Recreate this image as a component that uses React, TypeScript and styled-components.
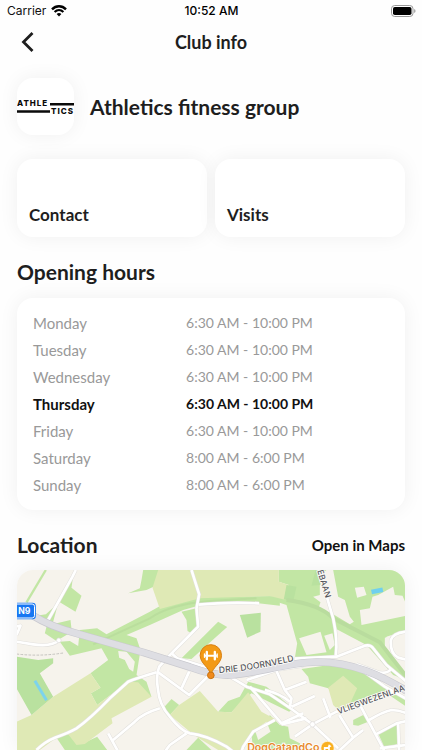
import React from "react";
import styled, { createGlobalStyle } from "styled-components";

const GlobalStyle = createGlobalStyle`
  *, *::before, *::after { box-sizing: border-box; }
  body {
    margin: 0;
    background: #fefefe;
    color: #1e1e1e;
    font-family: Lato, "Open Sans", sans-serif;
  }
  h1, h2, p { margin: 0; }
`;

const cardShadow = "0 0 20px rgba(0, 0, 0, 0.06)";

const Screen = styled.div`
  display: flex;
  flex-direction: column;
  overflow: hidden;
`;

const StatusBar = styled.div`
  display: grid;
  grid-template-columns: 1fr auto 1fr;
  align-items: center;
  height: 22px;
  padding: 0 6px 0 7px;
  font: 400 12px/22px Inter, sans-serif;
  color: #111;
`;

const Carrier = styled.div`
  display: flex;
  align-items: center;
  gap: 5px;
`;

const Clock = styled.time`
  font-weight: 500;
  color: #000;
`;

const BatterySlot = styled.div`
  display: flex;
  justify-content: flex-end;
`;

const NavBar = styled.header`
  display: grid;
  grid-template-columns: 48px 1fr 48px;
  align-items: center;
  height: 40px;
`;

const BackButton = styled.button`
  display: flex;
  align-items: center;
  justify-content: center;
  height: 40px;
  padding: 0 0 0 8px;
  border: 0;
  background: none;
  color: #1e1e1e;
`;

const NavTitle = styled.h1`
  font-size: 18px;
  line-height: 24px;
  font-weight: 700;
  text-align: center;
`;

const Content = styled.main`
  display: flex;
  flex-direction: column;
  padding: 16px 17px 0;
`;

const ClubRow = styled.div`
  display: flex;
  align-items: center;
  gap: 16px;
  margin-bottom: 24px;
`;

const LogoTile = styled.div`
  display: flex;
  align-items: center;
  justify-content: center;
  width: 57px;
  height: 57px;
  border-radius: 16px;
  background: #fff;
  box-shadow: ${cardShadow};
`;

const Heading = styled.h2`
  font-size: 21px;
  line-height: 28px;
  font-weight: 700;
`;

const TileRow = styled.div`
  display: grid;
  grid-template-columns: 1fr 1fr;
  gap: 8px;
  margin-bottom: 21px;
`;

const Tile = styled.button`
  display: flex;
  align-items: flex-end;
  height: 78px;
  padding: 12px;
  border: 0;
  border-radius: 16px;
  background: #fff;
  box-shadow: ${cardShadow};
  color: #1e1e1e;
  font: 700 17px/20px Lato, sans-serif;
`;

const HoursCard = styled.section`
  margin: 12px 0 21px;
  padding: 11px 16px 12px;
  border-radius: 16px;
  background: #fff;
  box-shadow: ${cardShadow};
`;

const HoursTable = styled.table`
  width: 100%;
  border-collapse: collapse;
  table-layout: fixed;
`;

const HoursRow = styled.tr<{ $today: boolean }>`
  height: 27px;
  line-height: 20px;
  color: ${(p) => (p.$today ? "#111" : "#999")};

  th, td {
    padding: 0;
    text-align: left;
    font-weight: ${(p) => (p.$today ? 700 : 400)};
  }
  th {
    width: 43%;
    font-size: 15px;
  }
  td { font-size: 14px; }
`;

const LocationHead = styled.div`
  display: flex;
  align-items: center;
  justify-content: space-between;
  margin-bottom: 11px;
`;

const MapsLink = styled.a`
  color: #111;
  font-size: 15px;
  line-height: 20px;
  font-weight: 700;
  text-decoration: none;
`;

const MapFrame = styled.div`
  overflow: hidden;
  border-radius: 16px 16px 0 0;
  box-shadow: ${cardShadow};
`;

const MapSvg = styled.svg`
  display: block;
  width: 100%;
  height: 180px;
  font-family: Inter, sans-serif;
`;

const WifiIcon = () => (
  <svg width="16" height="12" viewBox="0 0 16 12" fill="none" aria-hidden="true">
    <path d="M1 4.3C5 .2 11 .2 15 4.3" stroke="#000" strokeWidth="2.4" />
    <path d="M3.6 7C6.2 4.5 9.8 4.5 12.4 7" stroke="#000" strokeWidth="2.2" />
    <path d="M8 11.5L5.6 8.9Q8 7 10.4 8.9Z" fill="#000" />
  </svg>
);

const BatteryIcon = () => (
  <svg width="25" height="12" viewBox="0 0 25 12" aria-hidden="true">
    <rect x=".5" y=".5" width="21.5" height="11" rx="3.2" fill="#fff" stroke="#999" />
    <rect x="2" y="2" width="18.5" height="8" rx="1.8" fill="#000" />
    <path d="M23.2 4v4q1.3-.6 1.3-2t-1.3-2Z" fill="#999" />
  </svg>
);

const ClubLogo = () => (
  <svg width="57" height="18" viewBox="0 0 57 18" role="img" aria-label="Athletics logo">
    <g fill="#0a0a0a" fontFamily="Inter, sans-serif" fontWeight="800" fontSize="8" letterSpacing="1">
      <text x="0" y="8">ATHLE</text>
      <text x="34" y="16">TICS</text>
    </g>
    <path d="M33 6.2h24M0 13.5h33" stroke="#0a0a0a" strokeWidth="2.4" />
  </svg>
);

const mainRoad =
  "M70 152Q120 184 200 205L400 262L540 306Q610 332 660 330C740 326 830 292 920 291C1030 290 1120 335 1190 378";

const minorRoads = [
  "M198 15L188 35L115 165",
  "M20 230L70 238Q125 246 148 226",
  "M20 184L32 182L20 210",
  "M80 555Q105 530 135 518Q180 502 200 490Q240 462 300 400L355 350Q380 340 440 322",
  "M545 15L568 88L560 130L565 185L540 210L485 265L448 305Q438 330 444 370Q448 420 480 455Q515 500 540 505Q590 510 650 545L670 560",
  "M566 119Q650 111 748 115",
  "M485 265L502 280L600 310",
  "M442 320L538 390L598 330",
  "M538 320L515 370",
  "M450 430Q400 445 375 470L310 525M295 505L325 560",
  "M530 505L480 540L465 560",
  "M660 335L710 365L780 388L845 432L908 478L985 550",
  "M720 365L815 475L880 445",
  "M795 465L730 500L700 545L695 560",
  "M710 345L800 315L880 302",
  "M800 318L825 375L890 350",
  "M825 375L845 400L840 425M845 425L915 393",
  "M765 375Q810 385 840 410",
  "M855 281L980 275L1065 242Q1082 238 1090 250L1130 300L1190 350",
  "M950 92L970 160Q984 225 978 272",
  "M1040 298L1110 323Q1135 326 1145 310",
  "M1060 318L1125 365L1190 402",
  "M1190 200Q1150 203 1143 225Q1140 265 1165 278L1190 284",
  "M940 400L962 458M908 478L980 440L1040 425L1190 365",
  "M988 450L1030 518L985 560M1030 518L1060 495",
  "M1053 425L1125 560",
  "M1078 465Q1120 440 1145 435Q1170 435 1190 445",
  "M1098 508L1160 475L1190 468M1165 475L1168 560M1110 550L1190 540",
  "M908 478L855 515M815 478L890 460",
];

const greens = [
  "190,32 185,68 215,92 197,140 150,112",
  "80,152 108,148 145,115 128,178 182,165 186,200 140,228 105,205 112,178",
  "150,230 180,228 205,243 210,195 262,190 290,208 420,140 460,118 570,95 810,93 810,122 720,112 565,122 520,135 420,180 350,210 380,220 392,255 380,330 410,350 425,395 355,350 262,420 243,385 272,368 242,325 295,285 275,250 180,272",
  "140,518 175,508 220,535 262,515 292,555 165,555",
  "395,45 400,15 452,15 460,52 410,75 355,85 390,70",
  "515,140 560,130 566,185 545,205 533,198 530,165",
  "515,280 625,170 652,186 545,282",
  "460,430 485,402 508,420 480,450",
  "625,440 655,408 690,395 715,350 770,365 850,430 838,440 725,385 695,410 665,442",
  "530,555 565,518 605,555",
  "807,15 1190,15 1190,195 1130,215 1125,245 1190,345 1150,330 1070,240 975,190 980,272 855,280 862,235 830,120 800,110 837,60 807,50",
  "875,312 975,298 1050,315 1190,400 1190,425 1130,385 1080,405 1015,435 955,370 900,355 895,335",
  "1030,465 1060,450 1075,470 1045,482 1030,480",
  "1105,505 1160,478 1168,535 1125,550",
  "780,450 810,480 835,485 840,520 870,535 875,555 780,555 730,555 725,510 765,480",
];

const farmland = [
  "445,15 807,15 807,50 837,60 828,105 780,93 570,100 450,132 428,68",
  "20,555 20,470 65,450 130,395 242,325 272,368 243,385 262,420 355,350 385,352 425,395 305,460 308,475 225,537 200,540 175,508 140,518 90,555",
  "480,450 508,420 570,378 625,440 665,442 715,382 755,440 795,462 725,500 700,555 625,555 565,518 540,500",
  "955,368 1000,332 1042,370 1028,400 1015,432 988,438 970,420",
];

const openLand = [
  "930,30 950,15 970,15 985,95 1005,105 1020,155 1032,170 1020,178 965,145 925,132 932,112 910,95 930,90",
  "1035,68 1062,65 1070,90 1042,98",
  "1050,135 1080,130 1088,95 1105,90 1150,65 1155,90 1178,92 1190,120 1190,152 1055,180",
  "868,220 932,200 950,262 890,270",
  "943,212 968,205 975,240 960,255",
  "1050,262 1080,265 1115,300 1070,290",
  "1125,218 1190,200 1190,290 1165,282 1125,250",
  "325,258 350,260 375,290 370,320 358,312 345,285 328,278",
  "735,495 770,470 782,500 745,525",
];

const AreaMap = () => (
  <MapSvg viewBox="20 15 1167 540" preserveAspectRatio="xMidYMin slice" role="img" aria-label="Map of the club location">
    <rect x="20" y="15" width="1170" height="545" fill="#f6f3ec" />
    <g fill="#c2e6a4">{greens.map((p) => <polygon key={p} points={p} />)}</g>
    <g fill="#dfe9b5">{farmland.map((p) => <polygon key={p} points={p} />)}</g>
    <g fill="#f6f3ec">{openLand.map((p) => <polygon key={p} points={p} />)}</g>
    <g fill="#b9e19f">
      <polygon points="20,275 85,285 130,280 130,295 90,325 130,395 65,450 20,370" />
      <polygon points="690,150 753,143 752,200 712,218" />
      <polygon points="830,60 860,65 850,110 822,103" />
      <polygon points="917,15 930,15 932,60 905,62" />
    </g>
    <path d="M108 15L50 112" stroke="#c2e6a4" strokeWidth="7" />
    <path d="M830 105Q930 118 970 160L1110 232L1190 335" fill="none" stroke="#b9dc9e" strokeWidth="12" />
    <path d="M250 238L420 160Q480 118 600 108L740 100" fill="none" stroke="#b4d99a" strokeWidth="6" opacity=".6" />
    <path d="M75 347L110 406" stroke="#7cd3ec" strokeWidth="9" />
    <path d="M1085 81L1119 74" stroke="#6fd0ee" strokeWidth="14" />
    <path d="M20 267Q90 275 160 264" fill="none" stroke="#c4c2be" strokeWidth="3" strokeDasharray="8 4" />
    <g fill="none" strokeLinejoin="round">
      <g stroke="#e2e0dd" strokeWidth="11">{minorRoads.map((d) => <path key={d} d={d} />)}</g>
      <g stroke="#fff" strokeWidth="8">{minorRoads.map((d) => <path key={d} d={d} />)}</g>
      <path d={mainRoad} stroke="#c9c9cf" strokeWidth="23" />
      <path d={mainRoad} stroke="#dedee3" strokeWidth="19" />
    </g>
    <circle cx="147" cy="226" r="7" fill="#fff" stroke="#dcdad8" strokeWidth="2" />
    <circle cx="908" cy="478" r="8" fill="#fff" stroke="#dcdad8" strokeWidth="2" />
    <path id="drie-path" d="M628 324Q730 318 880 281" fill="none" />
    <path id="vlieg-path" d="M986 448L1230 360" fill="none" />
    <path id="baan-path" d="M922 17L950 110" fill="none" />
    <g fill="#55555b" stroke="#fbfaf6" strokeWidth="5" paintOrder="stroke" fontWeight="500">
      <text fontSize="26"><textPath href="#drie-path">DRIE DOORNVELD</textPath></text>
      <text fontSize="25"><textPath href="#vlieg-path">VLIEGWEZENLAA</textPath></text>
      <text fontSize="25"><textPath href="#baan-path">EBAAN</textPath></text>
    </g>
    <rect x="2" y="113" width="76" height="50" rx="10" fill="#1877f2" />
    <rect x="4" y="117" width="70" height="42" rx="7" fill="#1877f2" stroke="#fff" strokeWidth="3" />
    <text x="25" y="148" fill="#fff" fontSize="26" fontWeight="700">N9</text>
    <path d="M603 330C598 306 571 296 571 271A32 32 0 0 1 635 271C635 296 608 306 603 330Z" fill="#f39a16" stroke="#d97f10" strokeWidth="3" />
    <path d="M585 272H621" stroke="#fff" strokeWidth="6" />
    <path d="M591 261V283M615 261V283" stroke="#fff" strokeWidth="7" strokeLinecap="round" />
    <path d="M584 267V277M622 267V277" stroke="#fff" strokeWidth="4" strokeLinecap="round" />
    <circle cx="603" cy="331" r="10" fill="#f08a1c" stroke="#c97412" strokeWidth="3" />
    <text x="712" y="558" fill="#e88a2e" stroke="#fff" strokeWidth="5" paintOrder="stroke" fontSize="32" fontWeight="600">DogCatandCo</text>
    <circle cx="953" cy="549" r="20" fill="#f9b020" stroke="#fff" strokeWidth="2" />
    <path d="M942 546h12l3-8 8 6-5 3v12h-5v-7h-8v7h-5Z" fill="#fff" />
  </MapSvg>
);

const weekday = "6:30 AM - 10:00 PM";
const weekend = "8:00 AM - 6:00 PM";
const hours = [
  { day: "Monday", time: weekday },
  { day: "Tuesday", time: weekday },
  { day: "Wednesday", time: weekday },
  { day: "Thursday", time: weekday },
  { day: "Friday", time: weekday },
  { day: "Saturday", time: weekend },
  { day: "Sunday", time: weekend },
];

export default function App() {
  return (
    <>
      <GlobalStyle />
      <Screen>
        <StatusBar>
          <Carrier>Carrier <WifiIcon /></Carrier>
          <Clock>10:52 AM</Clock>
          <BatterySlot><BatteryIcon /></BatterySlot>
        </StatusBar>
        <NavBar>
          <BackButton type="button" aria-label="Back">
            <svg width="14" height="22" viewBox="0 0 14 22" fill="none" aria-hidden="true">
              <path d="M11.5 2L2.5 11L11.5 20" stroke="currentColor" strokeWidth="2.8" />
            </svg>
          </BackButton>
          <NavTitle>Club info</NavTitle>
        </NavBar>
        <Content>
          <ClubRow>
            <LogoTile><ClubLogo /></LogoTile>
            <Heading>Athletics fitness group</Heading>
          </ClubRow>
          <TileRow>
            <Tile type="button">Contact</Tile>
            <Tile type="button">Visits</Tile>
          </TileRow>
          <Heading>Opening hours</Heading>
          <HoursCard>
            <HoursTable>
              <tbody>
                {hours.map(({ day, time }) => (
                  <HoursRow key={day} $today={day === "Thursday"}>
                    <th scope="row">{day}</th>
                    <td>{time}</td>
                  </HoursRow>
                ))}
              </tbody>
            </HoursTable>
          </HoursCard>
          <LocationHead>
            <Heading>Location</Heading>
            <MapsLink href="#map">Open in Maps</MapsLink>
          </LocationHead>
          <MapFrame id="map"><AreaMap /></MapFrame>
        </Content>
      </Screen>
    </>
  );
}
